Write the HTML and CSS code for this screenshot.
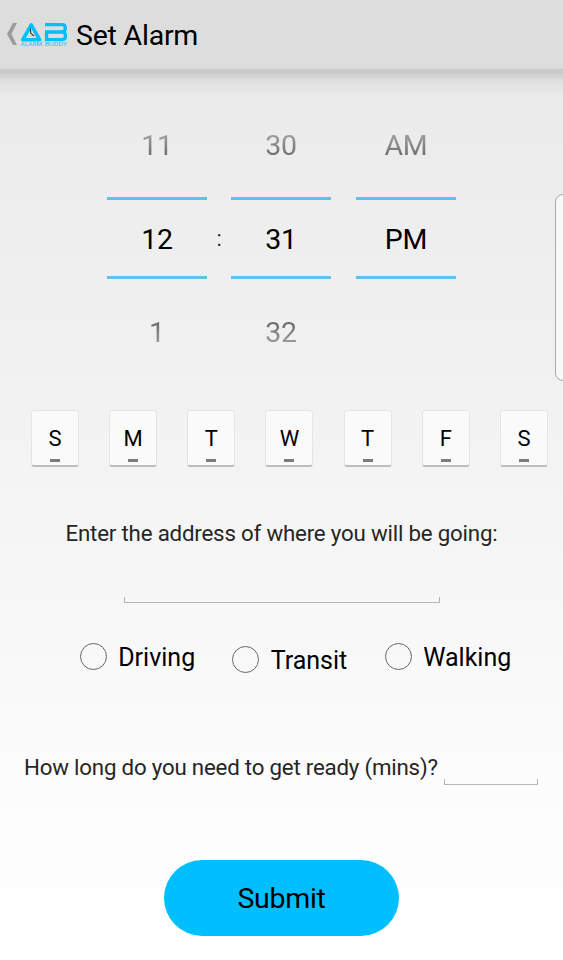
FILE: index.html
```html
<!DOCTYPE html>
<html lang="en">
<head>
<meta charset="utf-8">
<title>Set Alarm</title>
<link rel="stylesheet" href="styles.css">
</head>
<body>
<header class="bar">
  <svg class="back" width="11" height="22" viewBox="0 0 11 22"><path d="M7 0H11L5.4 11L11 22H7L1 11Z" fill="#9b9b9b"/></svg>
  <svg class="logo" width="48" height="25" viewBox="0 0 48 25">
    <path d="M2.7 17.8L11.2 2.8L19.7 17.8Z" fill="none" stroke="#00bfff" stroke-width="3.6" stroke-linejoin="round"/>
    <path d="M10.4 6.5L10.8 11.3L14 14" fill="none" stroke="#333" stroke-width="1.1"/>
    <path d="M25 2.7H42Q45.2 2.7 45.2 5.5V6.8Q45.2 10 42 10H25M42 10Q45.4 10 45.4 13.2V14.5Q45.4 17.6 42 17.6H26.6V10" fill="none" stroke="#00bfff" stroke-width="3.3"/>
    <text x=".5" y="24" textLength="21.5" lengthAdjust="spacingAndGlyphs" class="logo-name">ALARM</text>
    <text x="24.7" y="24" textLength="22.3" lengthAdjust="spacingAndGlyphs" class="logo-name">BUDDY</text>
  </svg>
  <h1 class="title">Set Alarm</h1>
</header>
<main class="screen">
  <section class="picker">
    <div class="wheel"><span class="prev">11</span><span class="now">12</span><span class="next">1</span></div>
    <span class="colon">:</span>
    <div class="wheel"><span class="prev">30</span><span class="now">31</span><span class="next">32</span></div>
    <div class="wheel half"><span class="prev">AM</span><span class="now">PM</span></div>
  </section>
  <section class="days">
    <button class="day">S</button><button class="day">M</button><button class="day">T</button><button class="day">W</button><button class="day">T</button><button class="day">F</button><button class="day">S</button>
  </section>
  <label class="question" for="address">Enter the address of where you will be going:</label>
  <input class="field address" id="address">
  <section class="modes">
    <label class="mode"><i class="radio"></i><span>Driving</span></label>
    <label class="mode lower"><i class="radio"></i><span>Transit</span></label>
    <label class="mode"><i class="radio"></i><span>Walking</span></label>
  </section>
  <section class="ready">
    <label class="ready-text" for="mins">How long do you need to get ready (mins)?</label>
    <input class="field mins" id="mins">
  </section>
  <button class="submit">Submit</button>
</main>
<div class="edge-handle"></div>
</body>
</html>
```
FILE: styles.css
```css
* { box-sizing: border-box; }
body {
  margin: 0;
  width: 563px;
  height: 960px;
  overflow: hidden;
  position: relative;
  font-family: Roboto, sans-serif;
  color: #000;
  background: linear-gradient(#eaeaea 0, #ebebeb 100px, #f3f3f3 440px, #f8f8f8 640px, #fcfcfc 780px, #fff 950px);
}
button, input { font-family: inherit; color: inherit; padding: 0; margin: 0; }
.bar {
  height: 73px;
  display: flex;
  align-items: flex-start;
  padding: 0 0 0 6px;
  background: #ddd;
  border-bottom: 4px solid #cacaca;
}
.back { margin-top: 23px; }
.logo { margin: 22px 0 0 3px; }
.logo-name { font: 400 5.2px Roboto, sans-serif; fill: #1cc0fa; }
.title { margin: 19px 0 0 8px; font-size: 28.5px; line-height: 34px; font-weight: 400; letter-spacing: -.22px; white-space: nowrap; }
.screen {
  height: 887px;
  display: flex;
  flex-direction: column;
  background: linear-gradient(rgba(0,0,0,.13), rgba(0,0,0,.05) 8px, transparent 24px) no-repeat;
}
.picker { display: flex; padding: 25px 0 0 107px; height: 307px; font-size: 28.5px; letter-spacing: -.2px; }
.wheel { width: 100px; display: grid; grid-template-rows: 99px 82px 99px; text-align: center; }
.wheel span { display: flex; justify-content: center; align-items: center; }
.wheel.half { margin-left: 25px; }
.prev, .next { color: transparent; background-clip: text; -webkit-background-clip: text; }
.wheel .prev { padding-bottom: 4px; background-image: linear-gradient(#a0a0a0 36px, #686868 60px); }
.wheel .now { border: solid #5fc2e8; border-width: 3px 0; padding-top: 2px; }
.wheel .next { padding-top: 8px; background-image: linear-gradient(#686868 42px, #a0a0a0 66px); }
.colon { width: 24px; padding-top: 128px; text-align: center; font-size: 22px; line-height: 26px; color: #333; }
.days { display: flex; justify-content: space-between; padding: 30px 15px 0 31px; }
.day {
  width: 48px;
  height: 57px;
  border: 1px solid #e5e5e5;
  border-bottom: 2px solid #bdbdbd;
  border-radius: 3px;
  background: #fafafa;
  font-size: 22px;
  line-height: 26px;
  display: flex;
  flex-direction: column;
  align-items: center;
  padding-top: 15px;
}
.day::after { content: ""; width: 10px; height: 3px; margin-top: 6.5px; background: #7c7c7c; }
.question { margin-top: 53px; height: 27px; text-align: center; font-size: 22.3px; line-height: 26px; letter-spacing: -.2px; color: #262626; white-space: nowrap; }
.field { border: solid #b5b5b5; border-width: 0 1px 1px; background: transparent; outline: 0; height: 6px; }
.address { width: 316px; margin: 50px 0 0 124px; }
.modes { display: flex; margin: 40px 0 0 79.5px; height: 32px; font-size: 25px; line-height: 30px; }
.mode { width: 152.5px; display: flex; white-space: nowrap; }
.mode.lower { margin-top: 3px; }
.radio { flex: none; width: 27px; height: 27px; border: 1px solid #666; border-radius: 50%; margin-right: 11.7px; }
.ready { display: flex; margin: 79px 0 0 24px; height: 34px; }
.ready-text { width: 420px; font-size: 22.3px; line-height: 26px; letter-spacing: -.21px; color: #262626; white-space: nowrap; }
.mins { width: 94px; margin-top: 25px; }
.submit { width: 235px; height: 76px; margin: 72px 0 0 164px; padding-top: 2px; border: 0; border-radius: 38px; background: #00bfff; font-size: 28.5px; line-height: 34px; letter-spacing: -.3px; }
.edge-handle { position: absolute; left: 555px; top: 194px; width: 16px; height: 187px; border: 1px solid #aaa; border-radius: 9px; background: #f8f8f8; }
```
